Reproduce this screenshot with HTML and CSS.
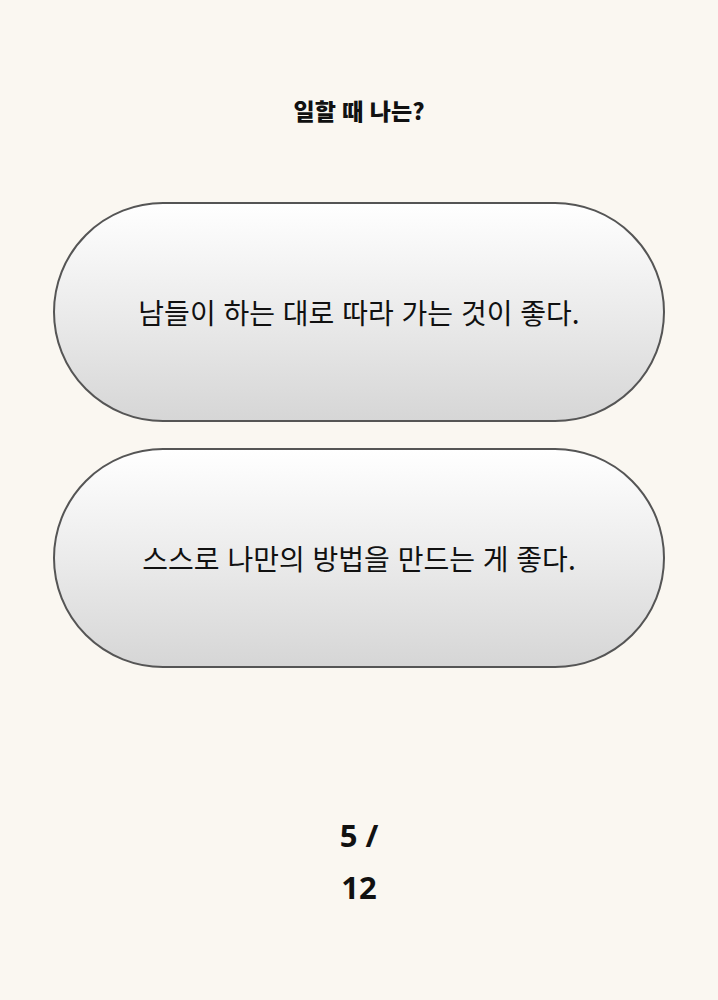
FILE: index.html
```html
<!DOCTYPE html>
<html lang="ko">
<head>
<meta charset="utf-8">
<title>일할 때 나는?</title>
<link rel="stylesheet" href="styles.css">
</head>
<body>
<main class="quiz">
  <h1 class="question">일할 때 나는?</h1>
  <div class="choices">
    <button class="choice">남들이 하는 대로 따라 가는 것이 좋다.</button>
    <button class="choice">스스로 나만의 방법을 만드는 게 좋다.</button>
  </div>
  <div class="progress">5 / 12</div>
</main>
</body>
</html>
```
FILE: styles.css
```css
html, body {
  margin: 0;
  padding: 0;
  background: #faf7f1;
}

.quiz {
  display: flex;
  flex-direction: column;
  align-items: center;
  padding-top: 94px;
  font-family: "Noto Sans CJK KR", "Noto Sans", sans-serif;
  color: #111;
}

.question {
  margin: 0;
  font-size: 23px;
  font-weight: 900;
  line-height: 32px;
}

.choices {
  margin-top: 76px;
  display: flex;
  flex-direction: column;
  gap: 26px;
  width: 612px;
}

.choice {
  height: 220px;
  border: 2px solid #555;
  border-radius: 110px;
  background: linear-gradient(to bottom, #ffffff 0%, #e9e9e9 55%, #d6d6d6 100%);
  font-family: "Noto Sans CJK KR", "Noto Sans", sans-serif;
  font-size: 28px;
  font-weight: 400;
  color: #111;
  cursor: pointer;
  padding: 0 30px;
}

.progress {
  margin-top: 141px;
  width: 60px;
  text-align: center;
  font-family: "Noto Sans", "Noto Sans CJK KR", sans-serif;
  font-size: 31px;
  font-weight: 700;
  line-height: 52px;
}
```
